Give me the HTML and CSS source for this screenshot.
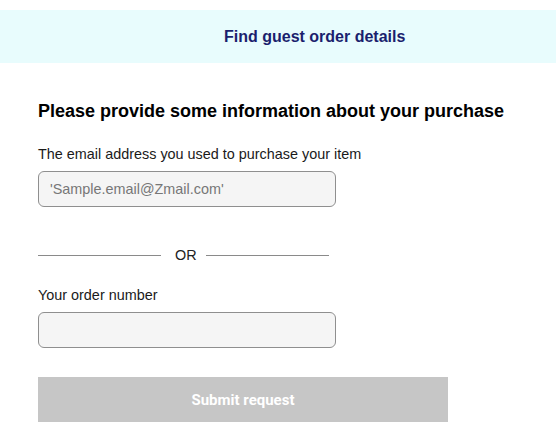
FILE: index.html
```html
<!DOCTYPE html>
<html>
<head>
<meta charset="utf-8">
<link rel="stylesheet" href="styles.css">
</head>
<body>
<div class="banner"><span class="banner-title">Find guest order details</span></div>
<main class="form">
  <h1 class="heading">Please provide some information about your purchase</h1>
  <label class="label">The email address you used to purchase your item</label>
  <input class="field" type="text" placeholder="'Sample.email@Zmail.com'">
  <div class="divider"><span class="line"></span><span class="or">OR</span><span class="line"></span></div>
  <label class="label">Your order number</label>
  <input class="field" type="text">
  <button class="submit">Submit request</button>
</main>
</body>
</html>
```
FILE: styles.css
```css
html, body { margin: 0; padding: 0; background: #fff; }
body { font-family: "Liberation Sans", Arial, sans-serif; color: #111; }
.banner {
  margin-top: 10px;
  height: 53px;
  background: #e8fcfd;
  display: flex;
  align-items: center;
  padding-left: 224px;
}
.banner-title { font-size: 16px; font-weight: bold; color: #1b1f6e; }
.form { padding: 0 38px; display: flex; flex-direction: column; align-items: flex-start; }
.heading { margin: 38px 0 0; font-size: 18px; font-weight: bold; color: #000; line-height: 20px; }
.label { font-size: 14.4px; color: #1a1a1a; margin-top: 24px; line-height: 16px; }
.heading + .label { margin-top: 25px; }
.field {
  box-sizing: border-box;
  width: 298px; height: 36px;
  margin-top: 9px;
  border: 1px solid #8f8f8f; border-radius: 6px;
  background: #f5f5f5;
  padding: 0 11px;
  font-family: "Liberation Sans", Arial, sans-serif;
  font-size: 14.4px; color: #333;
}
.field::placeholder { color: #777; }
.divider { display: flex; align-items: center; width: 291px; margin-top: 40px; height: 16px; }
.line { flex: 0 0 123px; height: 1px; background: #8a8a8a; }
.or { font-size: 14.4px; color: #222; padding: 0 9px 0 14px; }
.submit {
  margin-top: 29px;
  width: 410px; height: 45px;
  border: none; background: #c6c6c6;
  color: #fff; font-family: Roboto, "Liberation Sans", sans-serif;
  font-size: 15px; font-weight: bold;
}
```
